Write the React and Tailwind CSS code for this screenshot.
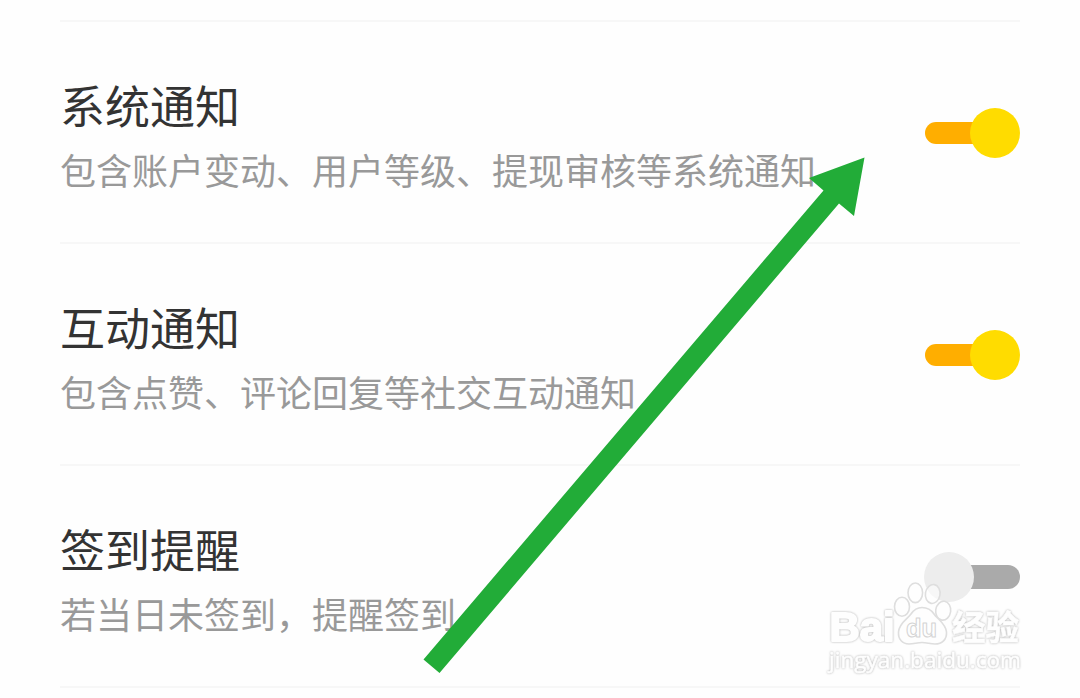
import React, { useState } from "react";

const initialSettings = [
  {
    id: "system",
    title: "系统通知",
    description: "包含账户变动、用户等级、提现审核等系统通知",
    enabled: true,
  },
  {
    id: "interaction",
    title: "互动通知",
    description: "包含点赞、评论回复等社交互动通知",
    enabled: true,
  },
  {
    id: "checkin",
    title: "签到提醒",
    description: "若当日未签到，提醒签到",
    enabled: false,
  },
];

const Toggle = ({ label, enabled, onChange }) => (
  <button
    type="button"
    role="switch"
    aria-label={label}
    aria-checked={enabled}
    onClick={onChange}
    className={`flex h-[50px] w-24 shrink-0 items-center ${
      enabled ? "" : "flex-row-reverse"
    }`}
  >
    <span
      className={
        enabled
          ? "ml-px h-[22px] w-[60px] rounded-l-full bg-[#ffae00]"
          : "h-6 w-[60px] rounded-r-full bg-[#aaaaaa]"
      }
    />
    <span
      className={`size-[50px] shrink-0 rounded-full ${
        enabled ? "-ml-[15px] bg-[#ffdc00]" : "-mr-[14px] z-10 bg-[#ededed]"
      }`}
    />
  </button>
);

const SettingRow = ({ setting, onToggle }) => (
  <div className="flex h-[222px] items-start justify-between border-t-2 border-[#f7f7f7]">
    <div className="pt-12 whitespace-nowrap">
      <h2 className="text-[45px] leading-[69px] text-[#333333]">{setting.title}</h2>
      <p className="text-[36px] leading-[60px] text-[#999999]">{setting.description}</p>
    </div>
    <div className="pt-[86px]">
      <Toggle label={setting.title} enabled={setting.enabled} onChange={onToggle} />
    </div>
  </div>
);

const Arrow = () => (
  <svg
    className="pointer-events-none absolute top-0 left-0"
    width="1080"
    height="698"
    viewBox="0 0 1080 698"
  >
    <polygon
      points="864.5,157.5 809,178 823.5,190.5 423.5,659.5 439.5,673 839,203.5 854,216"
      fill="#22ac38"
    />
  </svg>
);

const Watermark = () => (
  <svg
    className="pointer-events-none absolute top-[576px] left-[820px] z-20"
    width="220"
    height="110"
    viewBox="820 576 220 110"
    fill="#fefefe"
    stroke="#dedede"
    strokeWidth="1.6"
    strokeLinejoin="round"
  >
    {/* Paw */}
    <g fillOpacity="0.6">
      <ellipse cx="902" cy="606.7" rx="7.5" ry="9.5" />
      <ellipse cx="915.3" cy="592.8" rx="7.3" ry="9.8" />
      <ellipse cx="932.7" cy="594" rx="7.3" ry="9.5" transform="rotate(10 932.7 594)" />
      <ellipse cx="943.2" cy="610.7" rx="7.5" ry="9.5" transform="rotate(8 943.2 610.7)" />
    </g>
    <path d="M922 607.5c-5 0-8 2-11 6.500c-3 4.500-12 9-12.500 18c-.5 7.500 4 12 10.500 12c5 0 8-1.500 13-1.500s8 1.500 13 1.500c7 0 12-4.500 11.500-12c-.5-8-9.500-13.500-12.500-18c-3-4.500-7-6.500-12-6.500z" />
    <text
      x="906"
      y="637"
      fontSize="25"
      strokeWidth="1"
      stroke="#d4d4d4"
      textLength="31"
      lengthAdjust="spacingAndGlyphs"
      className="font-['Liberation_Sans',sans-serif] font-bold"
    >
      du
    </text>

    {/* Lettering: white with a soft grey edge */}
    <g stroke="#fefefe" className="[filter:drop-shadow(0_0_1px_#b0b0b0)]">
      <text
        x="829.5"
        y="641"
        fontSize="40"
        strokeWidth="2"
        textLength="65"
        lengthAdjust="spacingAndGlyphs"
        className="font-['Liberation_Sans',sans-serif] font-bold"
      >
        Bai
      </text>
      <text
        x="952"
        y="640"
        fontSize="34"
        strokeWidth="0.6"
        textLength="67"
        lengthAdjust="spacingAndGlyphs"
        className="font-['Noto_Sans_CJK_SC',sans-serif] font-bold"
      >
        经验
      </text>
      <text
        x="829"
        y="668"
        fontSize="22"
        strokeWidth="0.6"
        textLength="192"
        lengthAdjust="spacingAndGlyphs"
        className="font-['Open_Sans',sans-serif] font-medium"
      >
        jingyan.baidu.com
      </text>
    </g>
  </svg>
);

const App = () => {
  const [settings, setSettings] = useState(initialSettings);

  const handleToggle = (id) => {
    setSettings((prev) =>
      prev.map((item) => (item.id === id ? { ...item, enabled: !item.enabled } : item))
    );
  };

  return (
    <div className="relative h-[698px] w-[1080px] overflow-hidden bg-[#fefefe] px-[60px] pt-5 font-['Noto_Sans_CJK_SC',sans-serif]">
      {settings.map((setting) => (
        <SettingRow
          key={setting.id}
          setting={setting}
          onToggle={() => handleToggle(setting.id)}
        />
      ))}
      <div className="border-t-2 border-[#f7f7f7]" />

      <Arrow />
      <Watermark />
    </div>
  );
};

export default App;
